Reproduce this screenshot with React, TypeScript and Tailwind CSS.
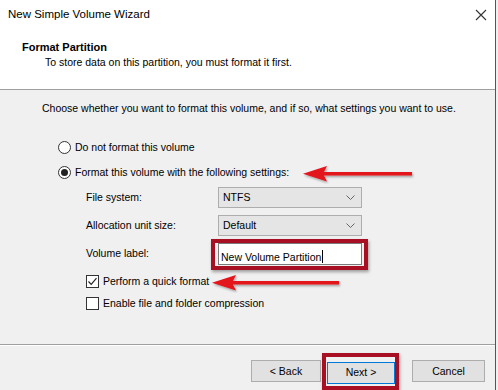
import React from "react";

const FONT = "font-['Liberation_Sans','Arial',sans-serif]";

function Radio({ checked, label }: { checked?: boolean; label: string }) {
  return (
    <div className="flex h-[13px] items-center">
      <span className="flex h-[13px] w-[13px] items-center justify-center rounded-full border border-[#333] bg-white">
        {checked && <span className="h-[7px] w-[7px] rounded-full bg-[#222]" />}
      </span>
      <span className="ml-[4px] text-[10.5px] leading-none text-black">{label}</span>
    </div>
  );
}

function Check({ checked, label }: { checked?: boolean; label: string }) {
  return (
    <div className="flex h-[13px] items-center">
      <span className="flex h-[13px] w-[13px] items-center justify-center border border-[#333] bg-white">
        {checked && (
          <svg width="11" height="11" viewBox="0 0 11 11">
            <path d="M1.5 5.5 L4.2 8.3 L9.5 2.2" fill="none" stroke="#222" strokeWidth="1.2" />
          </svg>
        )}
      </span>
      <span className="ml-[4px] text-[10.5px] leading-none text-black">{label}</span>
    </div>
  );
}

function Select({ value }: { value: string }) {
  return (
    <div className="flex h-[21px] w-[144px] items-center justify-between border border-[#adadad] bg-[#e5e5e5] pl-[4px] pr-[6px]">
      <span className="text-[10.5px] text-black">{value}</span>
      <svg width="9" height="6" viewBox="0 0 9 6">
        <path d="M0.5 0.5 L4.5 4.5 L8.5 0.5" fill="none" stroke="#666" strokeWidth="1" />
      </svg>
    </div>
  );
}

function Arrow({ width }: { width: number }) {
  return (
    <svg width={width} height="20" viewBox={`0 0 ${width} 20`} className="shrink-0">
      <defs>
        <filter id={`s${width}`} x="-10%" y="-50%" width="120%" height="200%">
          <feDropShadow dx="1" dy="1.5" stdDeviation="1" floodColor="#000" floodOpacity="0.35" />
        </filter>
      </defs>
      <g filter={`url(#s${width})`}>
        <rect x="20" y="8" width={width - 24} height="3.5" fill="#e3131b" />
        <path d="M1 9.8 L25 2 L21 9.8 L25 17.5 Z" fill="#e3131b" />
      </g>
    </svg>
  );
}

export default function App() {
  return (
    <div className={`relative h-[390px] w-[498px] overflow-hidden bg-[#f0f0f0] ${FONT}`}>
      <div className="flex h-full w-[496px] flex-col border-r border-[#555]">
        {/* header */}
        <div className="h-[90px] shrink-0 border-b border-[#a0a0a0] bg-white">
          <div className="flex h-[30px] items-center justify-between pl-[8px] pr-[8px]">
            <span className="text-[11.5px] text-black">New Simple Volume Wizard</span>
            <svg width="12" height="12" viewBox="0 0 12 12">
              <path d="M1 1 L11 11 M11 1 L1 11" stroke="#333" strokeWidth="1.1" />
            </svg>
          </div>
          <div className="pl-[22px] pt-[11px] text-[11px] font-bold leading-[13px] text-black">Format Partition</div>
          <div className="pl-[45px] pt-[2px] text-[10.5px] leading-[13px] text-black">
            To store data on this partition, you must format it first.
          </div>
        </div>

        {/* body */}
        <div className="relative min-h-0 flex-1">
          <div className="pl-[42px] pt-[12px] text-[10.5px] leading-[13px] text-black">
            Choose whether you want to format this volume, and if so, what settings you want to use.
          </div>

          <div className="flex flex-col gap-[12px] pl-[58px] pt-[26px]">
            <Radio label="Do not format this volume" />
            <div className="flex h-[13px] items-center">
              <Radio checked label="Format this volume with the following settings:" />
              <div className="ml-[13px] mt-[2px]">
                <Arrow width={114} />
              </div>
            </div>
          </div>

          <div className="mt-[8px] grid grid-cols-[132px_144px] items-center gap-y-[7px] pl-[86px]">
            <span className="text-[10.5px] text-black">File system:</span>
            <Select value="NTFS" />
            <span className="text-[10.5px] text-black">Allocation unit size:</span>
            <Select value="Default" />
            <span className="text-[10.5px] text-black">Volume label:</span>
            <div className="relative h-[22px] w-[144px] border border-[#7a7a7a] bg-white pl-[2px]">
              <span className="text-[10.5px] leading-[20px] text-black">New Volume Partition</span>
              <span className="ml-[1px] inline-block h-[13px] w-px translate-y-[2px] bg-black" />
              <div className="absolute -left-[8px] -right-[7px] -top-[5px] -bottom-[6px] border-[4px] border-[#a80f22] shadow-[1px_2px_3px_rgba(0,0,0,0.35)]" />
            </div>
          </div>

          <div className="mt-[10px] flex flex-col gap-[9px] pl-[86px]">
            <div className="flex h-[13px] items-center">
              <Check checked label="Perform a quick format" />
              <div className="ml-[2px] mt-[2px]">
                <Arrow width={132} />
              </div>
            </div>
            <Check label="Enable file and folder compression" />
          </div>
        </div>

        {/* footer */}
        <div className="h-[46px] shrink-0 border-t border-[#a0a0a0] shadow-[inset_0_1px_0_#fff]">
          <div className="flex items-center justify-end pr-[10px] pt-[14px]">
            <button className="h-[22px] w-[70px] border border-[#adadad] bg-[#e1e1e1] text-[10.5px] text-black">
              &lt; Back
            </button>
            <div className="relative ml-[6px]">
              <button className="h-[22px] w-[68px] border border-[#0078d7] bg-[#e1e1e1] text-[10.5px] text-black">
                Next &gt;
              </button>
              <div className="absolute -left-[5px] -right-[4px] -top-[6px] -bottom-[6px] border-[4px] border-[#a80f22] shadow-[1px_2px_3px_rgba(0,0,0,0.35)]" />
            </div>
            <button className="ml-[17px] h-[22px] w-[73px] border border-[#adadad] bg-[#e1e1e1] text-[10.5px] text-black">
              Cancel
            </button>
          </div>
        </div>
      </div>
    </div>
  );
}
